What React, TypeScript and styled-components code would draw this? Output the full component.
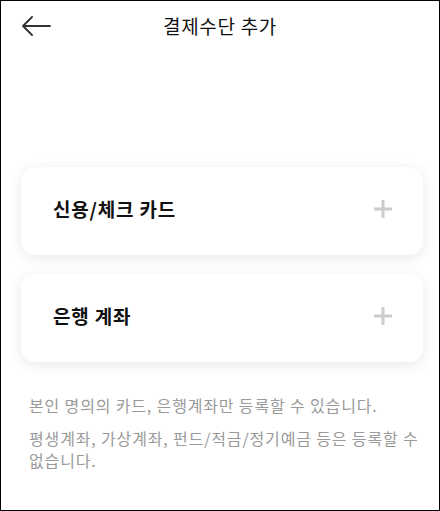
import React from "react";
import styled, { createGlobalStyle } from "styled-components";

const GlobalStyle = createGlobalStyle`
  body {
    margin: 0;
    background: #ffffff;
    font-family: "Noto Sans CJK KR", "Noto Sans", sans-serif;
  }
`;

const Screen = styled.main`
  width: 440px;
  height: 511px;
  box-sizing: border-box;
  border: 1px solid #000000;
  background: #ffffff;
  display: flex;
  flex-direction: column;
`;

const Header = styled.header`
  height: 50px;
  display: grid;
  grid-template-columns: 60px 1fr 60px;
  align-items: center;
`;

const BackButton = styled.button`
  border: 0;
  background: none;
  padding: 0 0 0 20px;
  display: flex;
  align-items: center;
  cursor: pointer;
`;

const Title = styled.h1`
  margin: 0;
  text-align: center;
  font-size: 19px;
  line-height: 24px;
  font-weight: 400;
  color: #111111;
  letter-spacing: 0.7px;
`;

const Methods = styled.section`
  margin-top: 116px;
  padding: 0 16px 0 20px;
  display: flex;
  flex-direction: column;
  gap: 19px;
`;

const MethodCard = styled.button`
  height: 88px;
  border: 0;
  border-radius: 14px;
  background: #ffffff;
  box-shadow: 0 3px 14px rgba(0, 0, 0, 0.09);
  display: flex;
  align-items: center;
  justify-content: space-between;
  padding: 0 30px 4px 32px;
  cursor: pointer;
  font-family: inherit;
`;

const MethodLabel = styled.span`
  font-size: 19px;
  line-height: 24px;
  font-weight: 700;
  color: #111111;
  letter-spacing: 0.8px;
`;

const Notes = styled.div`
  padding: 32px 16px 0 28px;
  display: flex;
  flex-direction: column;
  gap: 11px;
`;

const Note = styled.p`
  margin: 0;
  font-size: 16px;
  line-height: 22px;
  color: #9a9a9a;
  letter-spacing: 0.85px;
`;

function PlusIcon(): JSX.Element {
  return (
    <svg width="20" height="20" viewBox="0 0 20 20" aria-hidden="true">
      <path d="M10 1v18M1 10h18" stroke="#cccccc" strokeWidth="3" fill="none" />
    </svg>
  );
}

function BackIcon(): JSX.Element {
  return (
    <svg width="30" height="20" viewBox="0 0 30 20" aria-hidden="true">
      <path
        d="M29 10H2M11 1L2 10l9 9"
        stroke="#333333"
        strokeWidth="1.8"
        fill="none"
        strokeLinecap="round"
        strokeLinejoin="round"
      />
    </svg>
  );
}

const methods = ["신용/체크 카드", "은행 계좌"];

export default function App(): JSX.Element {
  return (
    <>
      <GlobalStyle />
      <Screen>
        <Header>
          <BackButton aria-label="뒤로">
            <BackIcon />
          </BackButton>
          <Title>결제수단 추가</Title>
          <span />
        </Header>
        <Methods>
          {methods.map((m) => (
            <MethodCard key={m}>
              <MethodLabel>{m}</MethodLabel>
              <PlusIcon />
            </MethodCard>
          ))}
        </Methods>
        <Notes>
          <Note>본인 명의의 카드, 은행계좌만 등록할 수 있습니다.</Note>
          <Note>평생계좌, 가상계좌, 펀드/적금/정기예금 등은 등록할 수 없습니다.</Note>
        </Notes>
      </Screen>
    </>
  );
}
